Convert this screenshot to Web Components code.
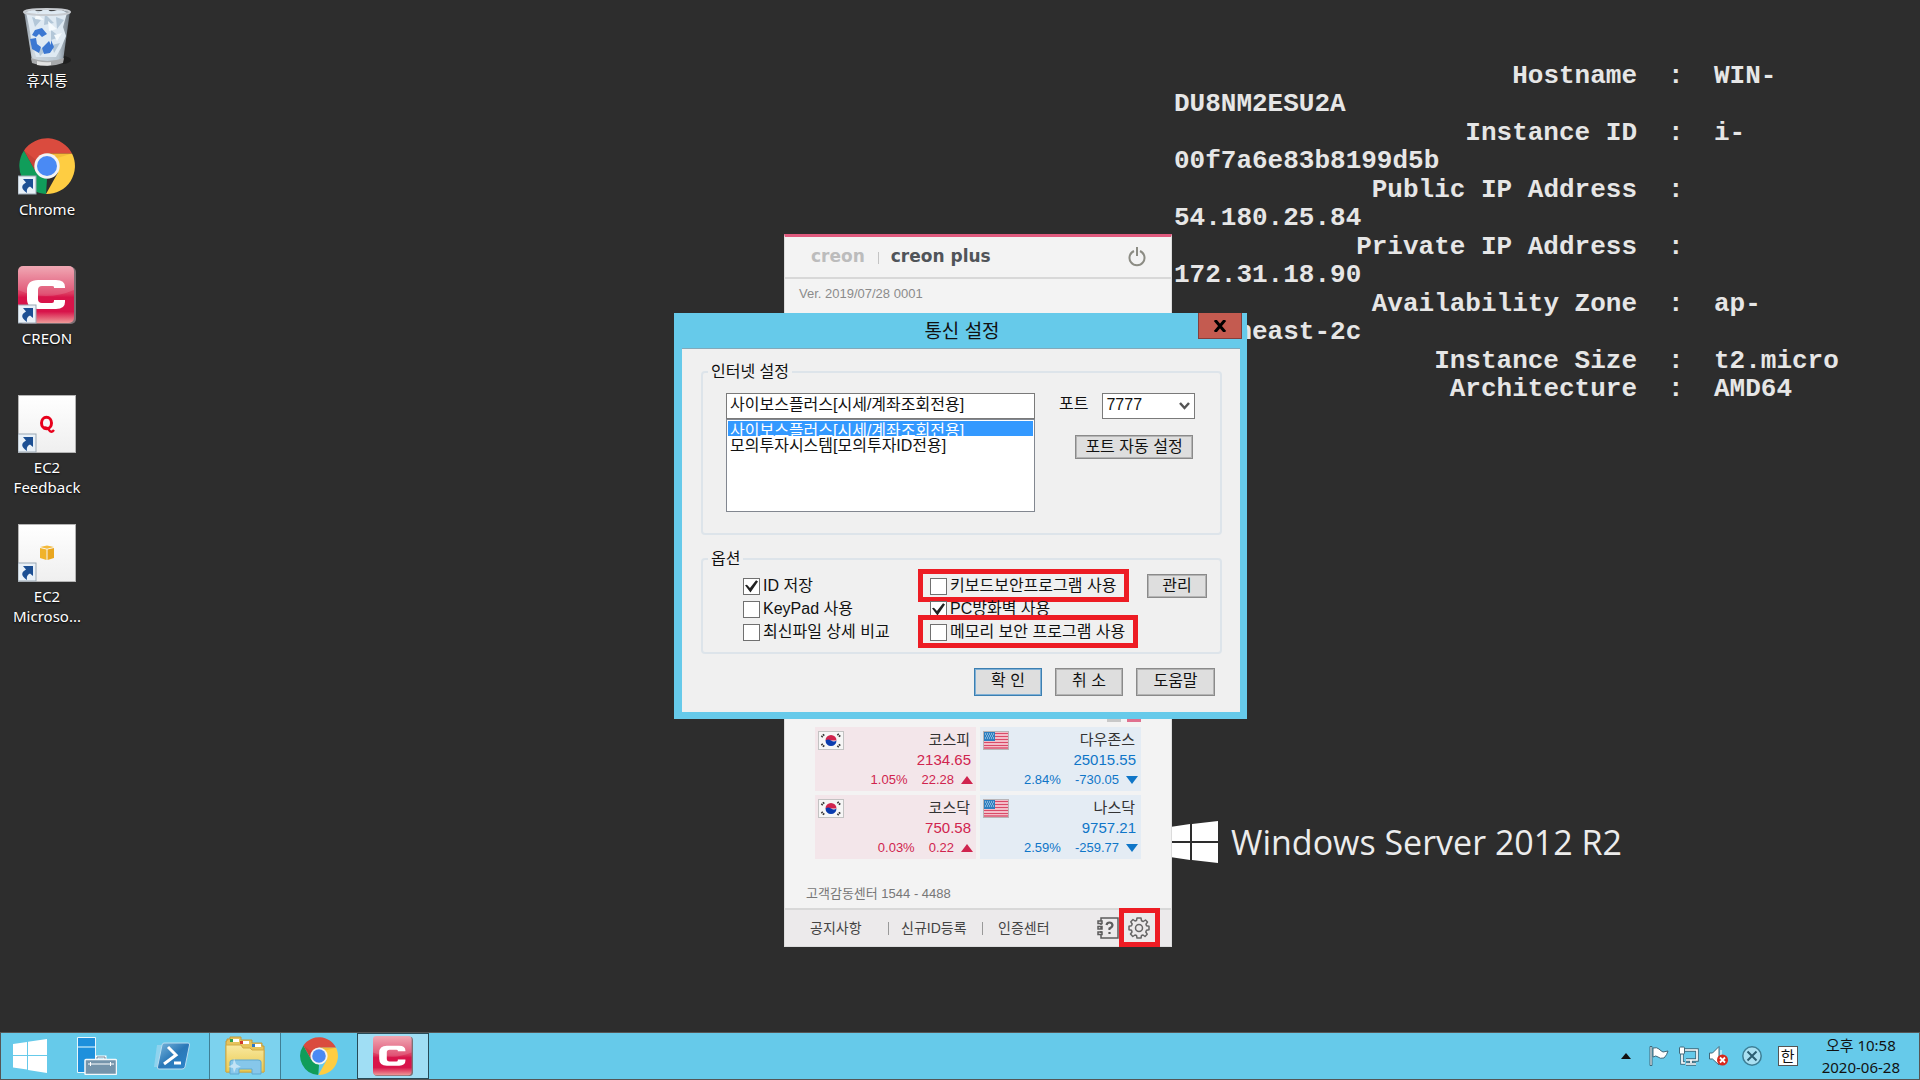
<!DOCTYPE html>
<html lang="ko">
<head>
<meta charset="utf-8">
<title>Windows Server 2012 R2</title>
<style>
html,body{margin:0;height:100%}
body{font-family:"Noto Sans","Noto Sans CJK KR",sans-serif;background:#2d2d2d;overflow:hidden}
</style>
</head>
<body>
<desk-top></desk-top>
<script>
const define = (name, html, setup) => {
  const template = document.createElement('template');
  template.innerHTML = '<style>*,*::before,*::after{box-sizing:border-box}</style>' + html;
  customElements.define(name, class extends HTMLElement {
    connectedCallback() {
      if (this.shadowRoot) return;
      this.attachShadow({mode: 'open'}).append(template.content.cloneNode(true));
      if (setup) setup(this, this.shadowRoot);
    }
  });
};

const chromeArt = `
  <path fill="#109d5a" d="M5 12.5 17 34 28 41 27 56A28 28 0 0 1 5 12.5Z"/>
  <path fill="#fecd42" d="M28 15.500H53A28 28 0 0 1 27 56L39 34.500Z"/>
  <path fill="#da4b3e" d="M5 12.5A28 28 0 0 1 53 15.5H28L17 34Z"/>
  <path fill="#b23a30" opacity=".45" d="M5 12.500 17 34 17 22Z"/>
  <path fill="#e8a92e" opacity=".5" d="M28 15.500H53L38 20Z"/>
  <circle cx="28" cy="28" r="12.700" fill="#f3f3f3"/><circle cx="28" cy="28" r="10" fill="#4a8af4"/>`;
const creonArt = `
  <defs><linearGradient id="cr" x1="0" y1="0" x2="0" y2="1"><stop offset="0" stop-color="#ee9aa8"/><stop offset=".48" stop-color="#dc3a60"/><stop offset=".55" stop-color="#d8144a"/><stop offset=".8" stop-color="#d8144a"/><stop offset="1" stop-color="#ee9a98"/></linearGradient></defs>
  <rect x="1" y="1" width="57" height="57" rx="5" fill="#7d6f74"/><rect width="56" height="57" rx="5" fill="url(#cr)"/>
  <path d="M0 5Q0 0 5 0H51Q56 0 56 5V24Q28 36 0 24Z" fill="#fff" opacity=".14"/>
  <path fill="#fff" d="M47 22H36V21Q36 20 34 20H24Q20 20 20 24V33Q20 37 24 37H34Q36 37 36 35V34H47V36Q47 43 38 43H20Q9 43 9 33V24Q9 14 20 14H38Q47 14 47 21Z"/>`;
const tile = `<defs><linearGradient id="tl" x1="0" y1="0" x2="0" y2="1"><stop offset="0" stop-color="#fff"/><stop offset="1" stop-color="#efefef"/></linearGradient></defs>
  <rect x=".5" y=".5" width="57" height="57" fill="url(#tl)" stroke="#b4b4b4"/>`;
const art = {
  chrome: `<g transform="translate(1 1)">${chromeArt}</g>`,
  creon: creonArt,
  feedback: tile + `<g fill="none" stroke="#e8001c"><ellipse cx="28.500" cy="28" rx="5" ry="5.800" stroke-width="3"/><path stroke-width="2.500" d="M25 33Q29 31.500 31 35T36 35"/></g>`,
  ec2: tile + `<path fill="#f0b32b" d="M22 24 28.500 25.500V36L22 34Z"/><path fill="#e9a61f" d="M36 24 29.500 25.500V36L36 34Z"/><path fill="#f4ba3c" d="M22 23 29 21.500 36 23 29 24.800Z"/>`,
  bin: `<defs><linearGradient id="bn"><stop offset="0" stop-color="#8d99a5"/><stop offset=".2" stop-color="#dce6ee"/><stop offset=".75" stop-color="#c4d3df"/><stop offset="1" stop-color="#6d7882"/></linearGradient></defs>
   <ellipse cx="44" cy="52" rx="9" ry="4" fill="#1f1f1f"/>
   <path fill="url(#bn)" opacity=".92" d="M6 3H52L45 53Q29 60 14 53Z"/>
   <path fill="#dfeaf3" d="M8 4 16 1 20 5 28 0 33 4 42 1 49 5 45 19 48 28 43 40 38 49 18 49 14 35 11 18Z"/>
   <path fill="#b3c7d8" d="m14 9 9 3-6 7ZM27 6l9 9-10 2ZM38 9l8 3-7 9ZM33 22l9 7-9 3ZM19 39l9 3-6 6ZM34 37l8-2-6 10Z"/>
   <path fill="#f5fafd" d="m18 5 8 7-9-1ZM30 13l9 8-8 2ZM27 40l8-4-3 10ZM36 27l8-2-5 8Z"/>
   <path fill="#3c78d2" d="m17 22 7-2 5 6-5 3-3-3-3 3-4-2ZM12 31l6-1 1 6 4 3-2 6-7-4ZM24 40l7-7 2 4 0-5 3 7-4 6-6 1Z"/>
   <ellipse cx="29" cy="4" rx="23" ry="3" fill="none" stroke="#c7cbd0" stroke-width="2"/>
   <path fill="#a7a9ab" d="M13 50Q29 56 46 50L45 55Q29 61 14 55Z"/><path fill="#e2e2e2" d="M19 53Q27 55 33 54V57Q26 58 19 57Z"/>`
};
const shortcut = `<rect x="0" y="39" width="18" height="18" fill="#e9f1f8" stroke="#9aa7b3"/><path fill="#1c4f93" d="M5 42H15V52L12 49.500Q8 51 9 56Q0 50 8 45.500Z"/>`;

define('desk-icon', `
<style>
:host{display:block;width:94px}
a{display:flex;flex-direction:column;align-items:center;gap:4px;min-height:110px;color:#fff;text-decoration:none;font-size:15px;line-height:20px;text-align:center;text-shadow:0 1px 2px #000}
svg{width:58px;height:58px}
</style>
<a href="#"><svg viewBox="0 0 58 58"></svg><span><slot></slot></span></a>`, (host, root) => {
  const kind = host.getAttribute('kind');
  root.querySelector('svg').innerHTML = art[kind] + (kind === 'bin' ? '' : shortcut);
});

define('info-row', `
<style>
:host{display:block}
div{display:grid;grid-template-columns:463px 53px 1fr;white-space:pre}
.label{text-align:right}.colon{padding-left:31px}.value{padding-left:24px}
.rest:empty{display:none}
</style>
<div><span class="label"></span><span class="colon">:</span><span class="value"></span></div>
<div class="rest"></div>`, (host, root) => {
  root.querySelector('.label').textContent = host.getAttribute('label');
  root.querySelector('.value').textContent = host.getAttribute('value') || '';
  root.querySelector('.rest').textContent = host.getAttribute('rest') || '';
});

define('wall-info', `
<style>
:host{display:flex;flex-direction:column;gap:1px;font:bold 26px/28px "Liberation Mono",monospace;color:#e6e6e6}
info-row:last-child{margin-top:-1px}
</style>
<info-row label="Hostname" value="WIN-" rest="DU8NM2ESU2A"></info-row>
<info-row label="Instance ID" value="i-" rest="00f7a6e83b8199d5b"></info-row>
<info-row label="Public IP Address" rest="54.180.25.84"></info-row>
<info-row label="Private IP Address" rest="172.31.18.90"></info-row>
<info-row label="Availability Zone" value="ap-" rest="northeast-2c"></info-row>
<info-row label="Instance Size" value="t2.micro"></info-row>
<info-row label="Architecture" value="AMD64"></info-row>`);

define('server-brand', `
<style>
:host{display:flex;align-items:center;gap:13px;font:400 34px/44px "Open Sans","Noto Sans",sans-serif;color:#ececec;white-space:nowrap}
svg{width:48px;height:42px;flex:none}
</style>
<svg viewBox="0 0 48 42"><path fill="#fff" d="M0 6 20 3V20H0ZM22 3 48 0V20H22ZM0 22H20V39L0 36ZM22 22H48V42L22 39Z"/></svg><span>Windows Server 2012 R2</span>`);

const flags = {
  kr: `<rect x=".5" y=".5" width="25" height="18" fill="#f6f6f6" stroke="#c2c2c2"/><path fill="#d0244e" d="M7.500 9.500a5.500 5.500 0 0 1 11 0Z"/><path fill="#0a3cae" d="M7.500 9.500a5.500 5.500 0 0 0 11 0q-2.500 2-5.500 0t-5.500 0Z"/><path stroke="#333" stroke-width="2" stroke-dasharray="1.500 .7" d="m3.500 6 3-3M19.500 3l3 3M3.500 13l3 3M19.500 16l3-3"/>`,
  us: `<rect x=".5" y=".5" width="25" height="18" fill="#fbe4e8" stroke="#b9b4b6"/><path stroke="#d94a68" stroke-width="1.500" d="M1 2.500H25M1 5.500H25M1 8.500H25M1 11.500H25M1 14.500H25M1 17H25"/><rect x="1" y="1" width="11" height="9" fill="#2d7fc0"/><path stroke="#d6eaf8" stroke-dasharray="1 1" d="M2 3H11M3 5H11M2 7H11"/>`
};
define('stock-card', `
<style>
:host{display:block;padding:3px 3px 0;height:64px;background:#f3e6ea;--tone:#d0244e}
:host([down]){background:#e4ecf4;--tone:#0f76c8}
.top{display:flex;justify-content:space-between;align-items:start}
svg{display:block}
.flag{width:26px;height:19px;margin-top:1px}
.name{font-size:15px;line-height:19px;padding-right:3px;color:#333}
.price{font-size:15px;line-height:20px;text-align:right;color:var(--tone);padding-right:2px}
.move{display:flex;justify-content:flex-end;align-items:center;font-size:13px;line-height:20px;color:var(--tone)}
.diff{margin-left:14px}
.tri{width:12px;height:8px;margin-left:7px;fill:var(--tone)}
:host([down]) .tri{transform:rotate(180deg)}
</style>
<div class="top"><svg class="flag" viewBox="0 0 26 19"></svg><span class="name"><slot></slot></span></div>
<div class="price"></div>
<div class="move"><span class="pct"></span><span class="diff"></span><svg class="tri" viewBox="0 0 12 8"><path d="M6 0 12 8H0Z"/></svg></div>`, (host, root) => {
  root.querySelector('.flag').innerHTML = flags[host.getAttribute('flag')];
  for (const key of ['price', 'pct', 'diff']) root.querySelector('.' + key).textContent = host.getAttribute(key);
});

define('creon-window', `
<style>
:host{display:flex;flex-direction:column;width:388px;height:713px;background:#f3f3f3;border:1px solid #dcdcdc;border-top:3px solid #e05a7e;font-family:"Liberation Sans","Noto Sans CJK KR",sans-serif}
header{display:flex;align-items:center;height:42px;padding:0 25px 2px 26px;border-bottom:2px solid #d8d8d8;font:bold 17px/20px "DejaVu Sans",sans-serif;color:#bcbcbc}
header b{color:#505459}
header i{width:1px;height:12px;margin:4px 12px 0 13px;background:#c4c4c4}
button{border:0;background:none;padding:0;display:block}
header button{margin-left:auto}
svg{display:block}
.ver{padding:6px 14px;font-size:13px;line-height:18px;color:#8b8b8b}
.tabs{display:flex;justify-content:flex-end;gap:6px;margin:auto 30px 5px 0}
.tabs i{width:14px;height:3px;background:#c8c8c8}.tabs i+i{background:#e0708e}
.cards{display:grid;grid-template-columns:161px 161px;gap:4px 4px;margin-left:30px}
.call{padding:25px 21px 4px;font-size:13px;line-height:20px;color:#777}
footer{display:flex;align-items:center;height:38px;padding:0 21px 0 25px;border-top:2px solid #d8d8d8;background:#eceaeb;font-size:14px;line-height:20px;color:#444}
footer a{color:inherit;text-decoration:none}
footer i{width:1px;height:13px;background:#999}
.n1{width:78px}.n2{width:81px;margin-left:12px}.n3{margin-left:15px}
.book{margin-left:auto}
.gear{position:relative;margin-left:9px}
.gear::after{content:"";position:absolute;top:-9px;left:-9px;width:41px;height:39px;border:5px solid #ed1c24}
</style>
<header><span>creon</span><i></i><b>creon plus</b>
<button aria-label="종료"><svg width="18" height="21" viewBox="0 0 18 21" fill="none" stroke="#8c8c84" stroke-width="2"><path d="M6 5A7.500 7.500 0 1 0 12 5M9 1V10"/></svg></button></header>
<div class="ver">Ver. 2019/07/28 0001</div>
<div class="tabs"><i></i><i></i></div>
<section class="cards">
<stock-card flag="kr" price="2134.65" pct="1.05%" diff="22.28">코스피</stock-card>
<stock-card down flag="us" price="25015.55" pct="2.84%" diff="-730.05">다우존스</stock-card>
<stock-card flag="kr" price="750.58" pct="0.03%" diff="0.22">코스닥</stock-card>
<stock-card down flag="us" price="9757.21" pct="2.59%" diff="-259.77">나스닥</stock-card>
</section>
<div class="call">고객감동센터 1544 - 4488</div>
<footer><a class="n1" href="#">공지사항</a><i></i><a class="n2" href="#">신규ID등록</a><i></i><a class="n3" href="#">인증센터</a>
<button class="book" aria-label="도움말"><svg width="22" height="22" viewBox="0 0 22 22" fill="none" stroke="#5c5c5c" stroke-width="1.500"><path d="M4 4V1H21V21H4V18M4 8V6M4 12V10M4 16V14M1 4H5V6.500H1ZM1 9.500H5V12H1ZM1 15H5V17.500H1Z"/><path stroke-width="2.200" d="M9.500 8Q10 5.500 12.500 5.500T15.500 8Q15.500 10 12.500 11.500V13M12.500 15V17"/></svg></button>
<button class="gear" aria-label="설정"><svg width="22" height="22" viewBox="0 0 22 22" fill="none" stroke="#666" stroke-width="1.500"><circle cx="11" cy="11" r="3.500"/><path stroke-linejoin="round" d="M9 1H13L13.500 3.700 15.300 4.500 17.500 3 19.500 5 18 7.200 18.500 8.700 21 9.300V12.700L18.500 13.300 17.800 15 19.200 17.200 17 19.500 15 18 13.500 18.500 13 21H9L8.500 18.500 7 18 4.800 19.500 2.500 17 4 15 3.500 13.300 1 12.700V9.300L3.500 8.700 4.200 7 2.800 4.800 5 2.500 7 4 8.500 3.500Z"/></svg></button></footer>`);

define('check-option', `
<style>
:host{display:block}
label{display:flex;width:max-content;align-items:center;gap:3px;position:relative;white-space:nowrap;line-height:22px}
input{appearance:none;flex:none;width:17px;height:17px;margin:0;border:1px solid #707070;background:#fff}
input:checked::before{content:"";display:block;width:13px;height:13px;margin:1px;background:#222;clip-path:polygon(0 45%,15% 40%,38% 65%,85% 5%,100% 15%,42% 100%)}
:host([mark]) label::after{content:"";position:absolute;inset:-6px -13px -5px -12px;border:5px solid #ed1c24}
</style>
<label><input type="checkbox"><span><slot></slot></span></label>`, (host, root) => {
  root.querySelector('input').checked = host.hasAttribute('checked');
});

define('push-button', `
<style>
:host{display:block}
button{width:100%;height:100%;margin:0;padding:0 0 2px;border:1px solid #8a8a8a;outline:1px solid #b4b4b4;outline-offset:-2px;background:#dedede;color:#111;font:inherit;white-space:pre}
:host([primary]) button{border-color:#3c7fb1;outline-color:#7fb0d6}
</style>
<button type="button"><slot></slot></button>`);

define('group-box', `
<style>
:host{display:block}
fieldset{margin:0;min-width:0;height:100%;padding:0;border:2px solid #dde4ea;border-radius:4px}
legend{margin-left:5px;padding:0 3px;line-height:22px}
</style>
<fieldset><legend></legend><slot></slot></fieldset>`, (host, root) => {
  root.querySelector('legend').textContent = host.getAttribute('label');
});

define('settings-dialog', `
<style>
:host{display:flex;flex-direction:column;width:573px;padding:0 7px 7px 8px;background:#66caea;color:#111;font:16px/22px "Liberation Sans","Noto Sans CJK KR",sans-serif}
header{display:grid;grid-template-columns:1fr auto 1fr;height:35px;margin-right:-2px;font-size:19px;line-height:38px}
h1{grid-column:2;margin:0;font:inherit}
.close{justify-self:end;width:44px;height:26px;border:1px solid #843f3c;border-top:0;background:#c45b50;padding:0}
.close svg{display:block;margin:auto}
main{height:364px;padding:12px 18px 0 19px;background:#f0f0f0;border-top:1px solid #83a9ba}
.net{height:174px}
.cols{display:grid;grid-template-columns:309px auto;gap:24px;padding:10px 0 0 23px}
input,select{display:block;font:inherit;color:inherit;border:1px solid #7a7a7a;border-radius:0;background:#fff;outline:0;margin:0}
input{width:309px;height:26px;padding:0 4px 6px 3px}
.list{width:309px;height:93px;padding:1px;overflow:hidden;border-color:#828790}
option{padding:0 2px}
.list option{display:flex;align-items:center;height:15px;min-height:15px;line-height:15px;overflow:visible}
.list option:checked{background:#3399ff linear-gradient(#39f,#39f);-webkit-text-fill-color:#fff}
.port{display:flex;align-items:center;gap:14px;margin-bottom:16px;height:26px}
.port label{padding-bottom:4px}
.combo{display:grid;width:93px}
.combo>*{grid-area:1/1}
.combo select{appearance:none;height:26px;padding:0 4px 6px 3px}
.combo svg{place-self:center end;margin-right:5px;pointer-events:none}
.auto{width:118px;height:24px;margin-left:16px}
.opt{height:106px;margin-top:13px}
.grid{display:grid;grid-template-columns:187px 217px 60px;grid-template-rows:24px 22px 24px;align-items:center;padding:4px 0 0 40px}
.grid push-button{height:24px}
nav{display:flex;justify-content:flex-end;gap:13px;padding:14px 7px 0 0}
nav push-button{width:68px;height:28px}
nav push-button:last-child{width:79px}
</style>
<header><h1>통신 설정</h1><button class="close" aria-label="닫기"><svg width="14" height="12" viewBox="0 0 14 12"><path stroke="#000" stroke-width="3" d="M2 0 12 12M12 0 2 12"/></svg></button></header>
<main>
<group-box class="net" label="인터넷 설정">
<div class="cols"><div><input aria-label="서버" value="사이보스플러스[시세/계좌조회전용]">
<select class="list" size="5" aria-label="서버 목록"><option selected>사이보스플러스[시세/계좌조회전용]</option><option>모의투자시스템[모의투자ID전용]</option></select></div>
<div><div class="port"><label for="port">포트</label><span class="combo"><select id="port"><option>7777</option></select><svg width="11" height="8" viewBox="0 0 11 8"><path fill="none" stroke="#555" stroke-width="2.500" d="M1 1 5.500 6 10 1"/></svg></span></div>
<push-button class="auto">포트 자동 설정</push-button></div></div>
</group-box>
<group-box class="opt" label="옵션">
<div class="grid">
<check-option checked>ID 저장</check-option><check-option mark>키보드보안프로그램 사용</check-option><push-button>관리</push-button>
<check-option>KeyPad 사용</check-option><check-option checked>PC방화벽 사용</check-option><span></span>
<check-option>최신파일 상세 비교</check-option><check-option mark>메모리 보안 프로그램 사용</check-option>
</div>
</group-box>
<nav><push-button primary>확 인</push-button><push-button>취 소</push-button><push-button>도움말</push-button></nav>
</main>`);

define('task-bar', `
<style>
:host{display:flex;align-items:stretch;height:48px;border:1px solid #555;background:#66caea;color:#111}
button{display:grid;place-items:center;border:0;background:none;padding:0;margin:0}
svg{display:block}
.w0{width:58px}.w1{width:76px}.w2{width:74px}.w3{width:72px}.w4{width:76px}
.run{border:1px solid #3f7f95;border-width:0 1px;background:#7cd2ee}
.active{border:1px solid #264a57;background:#a0def4}
.tray{display:flex;align-items:center;gap:10px;margin-left:auto}
.more{margin-right:8px}.link{margin:0 6px 0 4px}
time{font-size:15px;line-height:22px;text-align:center;padding:0 19px 0 14px}
.ime{width:20px;height:20px;border:1px solid #555;background:#fff;font:15px/18px "Noto Sans CJK KR",sans-serif;text-align:center}
</style>
<button class="w0" aria-label="시작"><svg width="34" height="34" viewBox="0 0 34 34"><path fill="#fff" d="M0 5 14 3V16H0ZM15 2.800 34 0V16H15ZM0 17H14V30.500L0 28.500ZM15 17H34V34L15 31Z"/></svg></button>
<button class="w1" aria-label="서버 관리자"><svg width="40" height="38" viewBox="0 0 40 38"><path fill="#1e90dc" stroke="#e8f6fc" d="M.5.500H18.500V35.500H.5Z"/><path stroke="#a9dbf5" stroke-width="1.500" d="M1 10H18"/><path fill="none" stroke="#fff" stroke-width="3" d="M20 23V20H28V23"/><path fill="none" stroke="#66849a" d="M20 23V20H28V23"/><rect x="8" y="22.500" width="31.500" height="15" rx="1" fill="#7594ab" stroke="#f4f8fa" stroke-width="1.500"/><path stroke="#fff" d="M11 27H37M13.500 25V29M33.500 25V29"/></svg></button>
<button class="w2" aria-label="PowerShell"><svg width="36" height="28" viewBox="0 0 36 28"><defs><linearGradient id="ps" x1="0" y1="0" x2="1" y2="1"><stop offset="0" stop-color="#7cb8dd"/><stop offset=".5" stop-color="#2a78b8"/><stop offset="1" stop-color="#2c86cc"/></linearGradient></defs><path fill="#8fd3ee" d="M3 3H8L4 25H0Z"/><path fill="url(#ps)" stroke="#b9dcf0" d="M10 1H34Q36 1 35.500 3L31 25Q30.500 27 28 27H5Q3 27 3.500 25L8 3Q8.500 1 10 1Z"/><path fill="none" stroke="#fff" stroke-width="3" d="m14 5 8 8-12 9M20 21H27"/></svg></button>
<button class="w3 run" aria-label="파일 탐색기"><svg width="40" height="40" viewBox="0 0 40 40"><defs><linearGradient id="fd" x1="0" y1="0" x2="0" y2="1"><stop offset="0" stop-color="#f8e9a0"/><stop offset="1" stop-color="#eac94f"/></linearGradient></defs><path fill="#e6c35b" stroke="#c39a3a" d="M2 5V3H5V1H16V4H27V7H37V10H39V36H1V5Z"/><path fill="#fff" d="M5 3H14V6H5ZM15 5H24V8H15ZM27 8H36V11H27Z"/><path fill="#2f9e4a" d="M5 3H8V6H5Z"/><path fill="#d33a2c" d="M15 5H18V8H15Z"/><path fill="#2a78c8" d="M27 8H30V11H27Z"/><path fill="url(#fd)" stroke="#d2ab45" d="M1 9H16L18 12H25L27 14H39V36H1Z"/><path fill="#86c7ea" stroke="#5ea9d2" d="M5 26Q5 24 8 24H33Q36 24 36 26V38H27V33H14V38H5Z"/><path fill="#fff" opacity=".5" d="m9 22 2 6 5 3-5 1-2 5-1-5-5-1 5-3Z"/></svg></button>
<button class="w4" aria-label="Chrome"><svg width="38" height="38" viewBox="0 0 56 56">${chromeArt}</svg></button>
<button class="w3 active" aria-label="CREON"><svg width="40" height="40" viewBox="0 0 58 58">${creonArt}</svg></button>
<div class="tray">
<button class="more" aria-label="숨겨진 아이콘 표시"><svg width="10" height="6" viewBox="0 0 10 6"><path fill="#111" d="M5 0 10 6H0Z"/></svg></button>
<button aria-label="관리 센터"><svg width="20" height="20" viewBox="0 0 20 20"><path fill="#fff" stroke="#41687a" d="M1 .5H3V19.500H1ZM4 2Q8 1 10 3T14 6L19 5Q18 9 15 12Q11 13 9 11T4 11Z"/></svg></button>
<button aria-label="네트워크"><svg width="20" height="20" viewBox="0 0 20 20"><g fill="none" stroke="#41687a" stroke-width="3.500"><path d="M6 4H18V14H7M12 14V17M7 18H17M3 8V17H6"/></g><g fill="none" stroke="#fff" stroke-width="1.700"><path d="M6 4H18V14H7M12 14V17M7 18H17M3 8V17H6"/></g><rect x=".5" y="1" width="5" height="7" rx="1" fill="#fff" stroke="#41687a"/></svg></button>
<button aria-label="볼륨"><svg width="19" height="20" viewBox="0 0 19 20"><path fill="#fff" stroke="#41687a" d="M.5 7H3.500L10 .5V19L3.500 13H.5Z"/><path stroke="#fff" d="M12 4v6"/><circle cx="13.500" cy="14" r="5.500" fill="#d8281c"/><path stroke="#fff" stroke-width="1.800" d="m11 11.500 5 5m0-5-5 5"/></svg></button>
<button class="link" aria-label="연결 안 됨"><svg width="20" height="20" viewBox="0 0 20 20"><circle cx="10" cy="10" r="9.200" fill="#a9e0f2" stroke="#3d7e95" stroke-width="1.500"/><path stroke="#2b5e72" stroke-width="2" d="m5.500 5.500 9 9m0-9-9 9"/></svg></button>
<span class="ime">한</span>
<time>오후 10:58<br>2020-06-28</time>
</div>`);

define('desk-top', `
<style>
:host{display:grid;grid-template-rows:1fr 48px;height:100vh;background:#2d2d2d}
main{position:relative;min-height:0}
.icons{display:flex;flex-direction:column;gap:19px;padding-top:8px}
wall-info{position:absolute;left:1174px;top:62px}
server-brand{position:absolute;left:1170px;top:820px}
creon-window{position:absolute;left:784px;top:234px}
settings-dialog{position:absolute;left:674px;top:313px}
</style>
<main>
<div class="icons">
<desk-icon kind="bin">휴지통</desk-icon>
<desk-icon kind="chrome">Chrome</desk-icon>
<desk-icon kind="creon">CREON</desk-icon>
<desk-icon kind="feedback">EC2<br>Feedback</desk-icon>
<desk-icon kind="ec2">EC2<br>Microso...</desk-icon>
</div>
<wall-info></wall-info>
<server-brand></server-brand>
<creon-window></creon-window>
<settings-dialog></settings-dialog>
</main>
<task-bar></task-bar>`);
</script>
</body>
</html>
